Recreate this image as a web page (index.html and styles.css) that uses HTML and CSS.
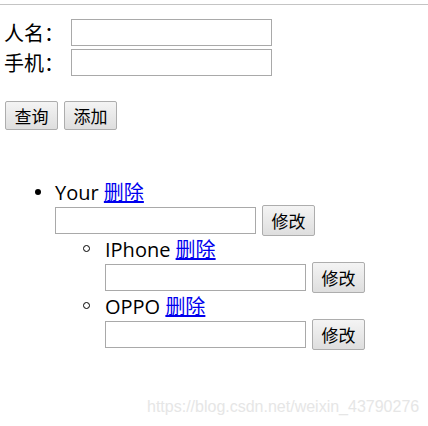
FILE: index.html
```html
<!DOCTYPE html>
<html>
<head>
<meta charset="utf-8">
<link rel="stylesheet" href="styles.css">
</head>
<body>
<div class="topline"></div>
<div class="form">
  <div class="field"><label class="lbl">人名：</label><input class="inp" type="text"></div>
  <div class="field"><label class="lbl">手机：</label><input class="inp" type="text"></div>
  <div class="actions"><button class="btn">查询</button><button class="btn">添加</button></div>
</div>
<ul class="tree">
  <li class="node">
    <span class="dot disc"></span>
    <div class="line">Your <a href="#">删除</a></div>
    <div class="edit"><input class="inp" type="text"><button class="btn tall">修改</button></div>
    <ul class="sub">
      <li class="node sn">
        <span class="dot ring"></span>
        <div class="line">IPhone <a href="#">删除</a></div>
        <div class="edit"><input class="inp" type="text"><button class="btn tall">修改</button></div>
      </li>
      <li class="node sn">
        <span class="dot ring"></span>
        <div class="line">OPPO <a href="#">删除</a></div>
        <div class="edit"><input class="inp" type="text"><button class="btn tall">修改</button></div>
      </li>
    </ul>
  </li>
</ul>
<div class="wm">https://blog.csdn.net/weixin_43790276</div>
</body>
</html>
```
FILE: styles.css
```css
html, body {
  margin: 0;
  padding: 0;
  background: #fff;
}
body {
  font-family: "Open Sans", "Noto Sans CJK SC", sans-serif;
  font-size: 20px;
  color: #000;
  position: relative;
  height: 426px;
  overflow: hidden;
}
.topline {
  margin-top: 4px;
  border-top: 1px solid #c4c4c4;
}
.form {
  padding-left: 4px;
  margin-top: 14px;
}
.field {
  display: flex;
  align-items: center;
  height: 27px;
  margin-bottom: 3px;
}
.lbl {
  width: 67px;
  line-height: 27px;
  font-family: "Noto Sans CJK SC", sans-serif;
}
.inp {
  box-sizing: border-box;
  width: 201px;
  height: 27px;
  border: 1px solid #a9a9a9;
  margin: 0;
  padding: 0 3px;
  font-size: 16px;
  background: #fff;
}
.actions {
  display: flex;
  gap: 6px;
  margin-top: 25px;
  padding-left: 1px;
}
.btn {
  box-sizing: border-box;
  width: 53px;
  height: 29px;
  margin: 0;
  padding: 0;
  border: 1px solid #adadad;
  border-radius: 2px;
  background: linear-gradient(#f4f4f4, #dedede);
  font-family: "Noto Sans CJK SC", sans-serif;
  font-size: 17px;
  color: #000;
}
.btn.tall {
  height: 31px;
}
.tree {
  list-style: none;
  margin: 49px 0 0 0;
  padding: 0;
}
.sub {
  list-style: none;
  margin: 0;
  padding: 0;
  grid-column: 2;
}
.node {
  display: grid;
  grid-template-columns: 55px 1fr;
  align-items: center;
}
.node.sn {
  grid-template-columns: 50px 1fr;
}
.line {
  grid-column: 2;
  grid-row: 1;
  height: 25px;
  line-height: 25px;
}
.line a {
  font-family: "Noto Sans CJK SC", sans-serif;
}
.dot {
  grid-column: 1;
  grid-row: 1;
  box-sizing: border-box;
  border-radius: 50%;
}
.disc {
  width: 6px;
  height: 6px;
  margin-left: 35px;
  background: #000;
}
.ring {
  width: 7px;
  height: 7px;
  margin-left: 28px;
  border: 1px solid #000;
}
.edit {
  grid-column: 2;
  display: flex;
  align-items: center;
  gap: 6px;
  height: 32px;
}
a {
  color: #0000ee;
  text-decoration: underline;
}
.wm {
  position: absolute;
  left: 147px;
  top: 398px;
  font-family: "Liberation Sans", Arial, sans-serif;
  font-size: 16px;
  color: #e6e6e6;
}
```
